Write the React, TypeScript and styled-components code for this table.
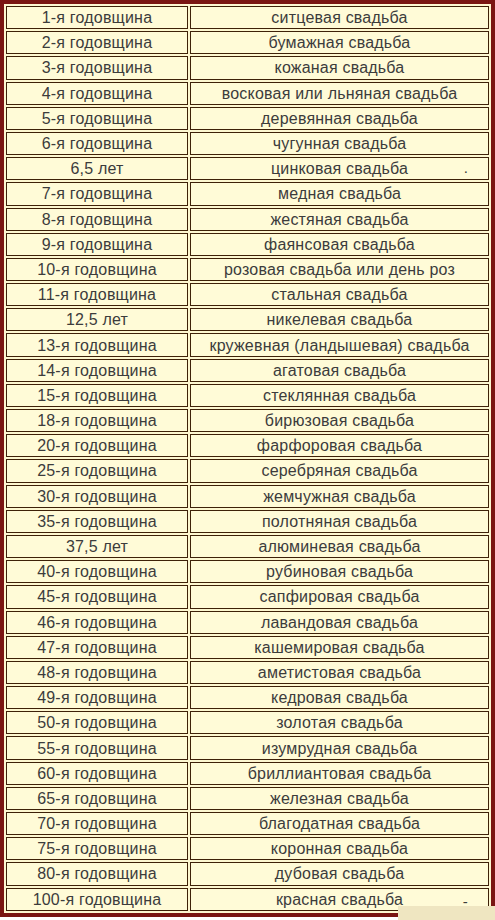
import styled, { createGlobalStyle } from "styled-components";

const GlobalStyle = createGlobalStyle`
  html, body {
    margin: 0;
    padding: 0;
    background: #ffffff;
  }
`;

const Page = styled.div`
  position: relative;
  width: 495px;
  height: 920px;
  overflow: hidden;
`;

const Table = styled.div`
  display: grid;
  grid-template-columns: 182px 299px;
  grid-auto-rows: 23.2px;
  gap: 2px;
  padding: 2px;
  border: 4px solid #7a1512;
  background: #fdf7d0;
  width: 495px;
  box-sizing: border-box;
`;

const Cell = styled.div`
  position: relative;
  border: 1px solid #3e2108;
  background: #fffbd7;
  display: flex;
  align-items: center;
  justify-content: center;
  padding-top: 1px;
  font-family: "Liberation Sans", Arial, sans-serif;
  font-size: 16px;
  letter-spacing: 0.2px;
  color: #3c3c3c;
  white-space: nowrap;
  box-sizing: border-box;
`;

const Mark = styled.span<{ $low?: boolean }>`
  position: absolute;
  right: 20px;
  top: ${(p) => (p.$low ? "4px" : "1px")};
  font-family: "Liberation Sans", Arial, sans-serif;
  font-size: 15px;
  color: #3c3c3c;
`;

const Patch = styled.div`
  position: absolute;
  left: 398px;
  top: 906px;
  width: 97px;
  height: 14px;
  background: #efe6c1;
`;

const rows: [string, string, string?][] = [
  ["1-я годовщина", "ситцевая свадьба"],
  ["2-я годовщина", "бумажная свадьба"],
  ["3-я годовщина", "кожаная свадьба"],
  ["4-я годовщина", "восковая или льняная свадьба"],
  ["5-я годовщина", "деревянная свадьба"],
  ["6-я годовщина", "чугунная свадьба"],
  ["6,5 лет", "цинковая свадьба", "."],
  ["7-я годовщина", "медная свадьба"],
  ["8-я годовщина", "жестяная свадьба"],
  ["9-я годовщина", "фаянсовая свадьба"],
  ["10-я годовщина", "розовая свадьба или день роз"],
  ["11-я годовщина", "стальная свадьба"],
  ["12,5 лет", "никелевая свадьба"],
  ["13-я годовщина", "кружевная (ландышевая) свадьба"],
  ["14-я годовщина", "агатовая свадьба"],
  ["15-я годовщина", "стеклянная свадьба"],
  ["18-я годовщина", "бирюзовая свадьба"],
  ["20-я годовщина", "фарфоровая свадьба"],
  ["25-я годовщина", "серебряная свадьба"],
  ["30-я годовщина", "жемчужная свадьба"],
  ["35-я годовщина", "полотняная свадьба"],
  ["37,5 лет", "алюминевая свадьба"],
  ["40-я годовщина", "рубиновая свадьба"],
  ["45-я годовщина", "сапфировая свадьба"],
  ["46-я годовщина", "лавандовая свадьба"],
  ["47-я годовщина", "кашемировая свадьба"],
  ["48-я годовщина", "аметистовая свадьба"],
  ["49-я годовщина", "кедровая свадьба"],
  ["50-я годовщина", "золотая свадьба"],
  ["55-я годовщина", "изумрудная свадьба"],
  ["60-я годовщина", "бриллиантовая свадьба"],
  ["65-я годовщина", "железная свадьба"],
  ["70-я годовщина", "благодатная свадьба"],
  ["75-я годовщина", "коронная свадьба"],
  ["80-я годовщина", "дубовая свадьба"],
  ["100-я годовщина", "красная свадьба", "-"],
];

export default function App() {
  return (
    <Page>
      <GlobalStyle />
      <Table>
        {rows.flatMap(([year, name, mark]) => [
          <Cell key={year + "-y"}>{year}</Cell>,
          <Cell key={year + "-n"}>
            {name}
            {mark && <Mark $low={mark === "-"}>{mark}</Mark>}
          </Cell>,
        ])}
      </Table>
      <Patch />
    </Page>
  );
}
